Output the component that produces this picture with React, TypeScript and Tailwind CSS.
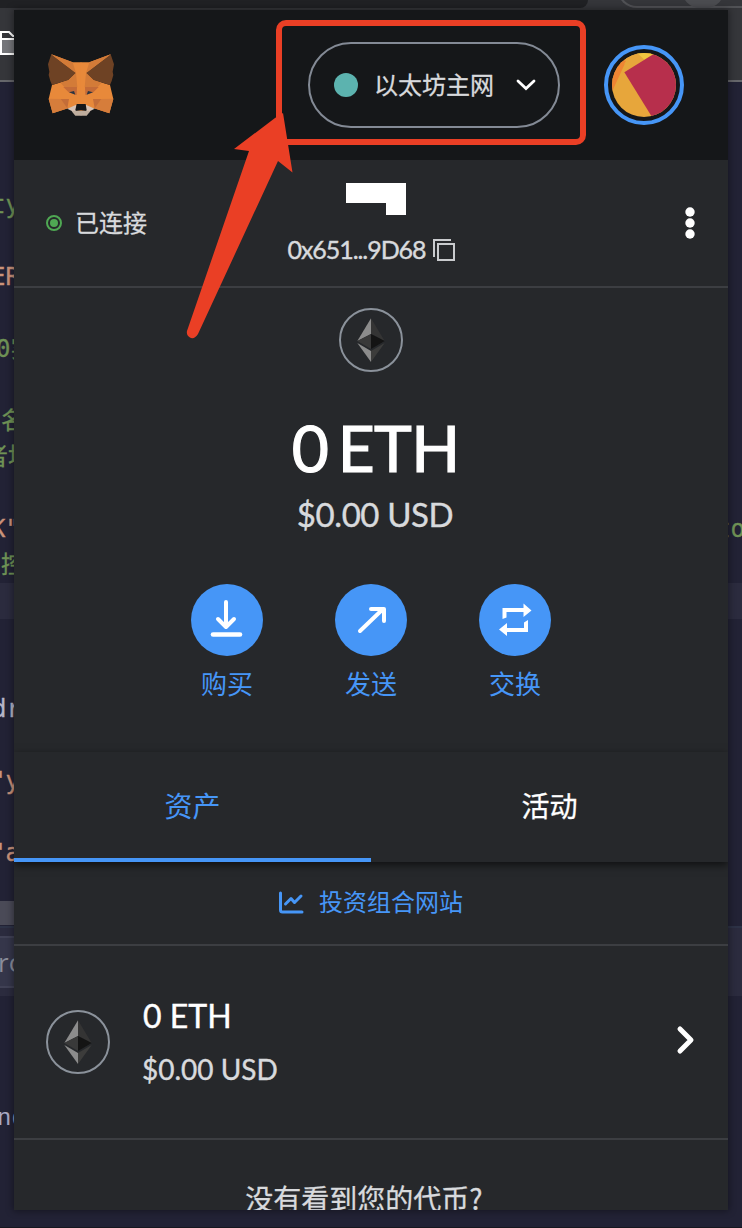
import React from "react";

const latin = "font-['Lato','Noto_Sans_CJK_SC',sans-serif]";
const cjk = "font-['Noto_Sans_CJK_SC',sans-serif]";

type CodeLine = { left?: string; color?: string; shift?: string; right?: string; active?: boolean };

const codeLines: CodeLine[] = [
  { left: "ty", color: "text-[#6f9255]", shift: "-ml-[9px]" },
  {},
  { left: "ER", color: "text-[#ca937a]", shift: "-ml-[9px]" },
  {},
  { left: "0实", color: "text-[#6f9255]", shift: "-ml-[4px]" },
  {},
  { left: "名", color: "text-[#6f9255]", shift: "ml-[1px]" },
  { left: "者地", color: "text-[#6f9255]", shift: "-ml-[16px]" },
  {},
  { left: 'K"', color: "text-[#ca937a]", shift: "-ml-[9px]", right: "to" },
  { left: "控", color: "text-[#6f9255]", shift: "ml-[1px]" },
  { active: true },
  {},
  {},
  { left: "dr", color: "text-[#b5b5c8]", shift: "-ml-[8px]" },
  {},
  { left: '"y', color: "text-[#ca937a]", shift: "-ml-[9px]" },
  {},
  { left: '"a', color: "text-[#ca937a]", shift: "-ml-[9px]" },
];

function Backdrop() {
  return (
    <div className="absolute inset-0 flex flex-col overflow-hidden bg-[#222235]">
      <div className="flex h-[10px] shrink-0 justify-between overflow-hidden bg-[#35363a]">
        <div className="h-2 w-[588px] rounded-br-[20px] bg-[#202124]" />
        <div className="-mt-[31px] flex h-[39px] w-[125px] justify-center rounded-bl-[20px] border-b-2 border-l-2 border-[#515256]">
          <div className="mt-[9px] ml-[44px] h-[30px] w-[42px] rounded-b-[18px] bg-[#4b4c50]" />
        </div>
      </div>
      <div className="h-[72px] shrink-0 border-b-2 border-[#66676b] bg-[#35363a]">
        <svg className="mt-[19px]" width="16" height="32" viewBox="0 0 16 32" fill="none">
          <path d="M1 10h14v15H1z" fill="#75767a" />
          <path d="M0 3h9l4 4h3M1 3v22h15M0 10h16" stroke="#fff" strokeWidth="2" />
        </svg>
      </div>
      <div className="h-[105px] shrink-0" />
      {codeLines.map((line, i) => (
        <div
          key={i}
          className={
            "flex h-9 shrink-0 items-center justify-between font-['DejaVu_Sans_Mono','Noto_Sans_CJK_SC',monospace] text-[24px] leading-9 [-webkit-text-stroke:0.3px_currentColor] " +
            (line.active ? "bg-[#2b2b3e]" : "")
          }
        >
          <div className="w-[14px] overflow-hidden whitespace-nowrap">
            <span className={`${line.color ?? ""} ${line.shift ?? ""} inline-block`}>{line.left}</span>
          </div>
          <div className="-mr-[3px] flex w-[24px] justify-end whitespace-nowrap text-[#6f9255]">{line.right}</div>
        </div>
      ))}
      <div className="h-[30px] shrink-0" />
      <div className="h-6 w-[14px] shrink-0 bg-[#4a4a57]" />
      <div className="mt-px h-[70px] shrink-0 border-t-2 border-[#2d3246] bg-[#2b2b3e] pt-2">
        <div className="flex h-[52px] w-5 items-center overflow-hidden border-y-2 border-[#404155] bg-[#35364a]">
          <span className="-ml-[2px] font-['Open_Sans',sans-serif] text-[26px] text-[#8a8c99]">ro</span>
        </div>
      </div>
      <div className="mt-[105px] h-9 shrink-0 font-['Liberation_Mono',monospace] text-[24px] leading-9 text-[#aaaac4]">
        <span className="-ml-[3px]">nd</span>
      </div>
      <div className="mt-auto h-px bg-[#17171f]" />
    </div>
  );
}

function Fox() {
  const half = (
    <>
      <path d="M153 163L217 187H243V333L203 325L157 340L145 297L155 255L205 240Z" fill="#e8893a" />
      <path d="M153 163L143 193L147 215L145 225L150 243L155 255L205 240L227 219Z" fill="#6e4224" />
      <path d="M153 163L217 187L227 219Z" fill="#d37b38" />
      <path d="M227 219L205 240L180 248L192 261L231 262Z" fill="#d37b38" />
      <path d="M189 261H230L229 285L205 277Z" fill="#c46b38" />
      <path d="M206 277L221 273L225 284Z" fill="#2b3542" />
      <path d="M145 296L181 297L203 325L157 340Z" fill="#d67d3b" />
      <path d="M181 297H206L201 325Z" fill="#c46d38" />
      <path d="M201 326L228 314L226 334H216Z" fill="#d7c3b6" />
      <path d="M218 332H243V347H225L214 334Z" fill="#bfae9e" />
    </>
  );
  return (
    <svg width="66" height="62" viewBox="143 162 198 186">
      {half}
      <g transform="translate(484 0) scale(-1 1)">{half}</g>
      <path d="M229 312H256L259 331H225Z" fill="#15181b" />
    </svg>
  );
}

function Avatar() {
  return (
    <div className="flex size-20 items-center justify-center rounded-full border-4 border-[#4696f7]">
      <svg className="size-16 rounded-full" viewBox="336 159 192 192">
        <rect x="336" y="159" width="192" height="192" fill="#e7a63b" />
        <path d="M336 159H390L378 184L336 275Z" fill="#ee8533" />
        <path d="M336 159H415L385 182L370 195L378 184Z" fill="#e7a63b" />
        <path d="M412 159H466L433 179Z" fill="#f1c63f" />
        <path d="M373 217L466 159H530V351H456Z" fill="#b72f4c" />
      </svg>
    </div>
  );
}

function EthToken() {
  return (
    <div className="flex size-16 shrink-0 items-center justify-center rounded-full border-2 border-[#8b929b]">
      <svg width="28" height="44" viewBox="560 474 84 132">
        <path d="M602 475L561 543L602 522Z" fill="#8c8c8c" />
        <path d="M602 475L643 543L602 522Z" fill="#343434" />
        <path d="M561 543L602 522V567Z" fill="#393939" />
        <path d="M643 543L602 522V567Z" fill="#141414" />
        <path d="M561 549L602 573V606Z" fill="#8c8c8c" />
        <path d="M643 549L602 573V606Z" fill="#3c3c3b" />
      </svg>
    </div>
  );
}

function Action({ label, children }: { label: string; children: React.ReactNode }) {
  return (
    <div className="flex w-[72px] flex-col items-center">
      <div className="flex size-[72px] items-center justify-center rounded-full bg-[#4696f7]">
        <svg width="40" height="40" viewBox="0 0 40 40" fill="none" stroke="#fff" strokeLinecap="round" strokeLinejoin="round">
          {children}
        </svg>
      </div>
      <span className="mt-[9px] text-[26px] leading-9 text-[#4696f7]">{label}</span>
    </div>
  );
}

function Callout() {
  return (
    <>
      <div className="absolute top-5 left-[276px] h-[125px] w-[310px] rounded-[10px] border-[6px] border-[#ea3f25]" />
      <svg className="absolute top-[110px] left-[180px]" width="120" height="234" viewBox="180 110 120 234">
        <path
          d="M283 113L292.5 172.5L278 161L198 334Q195 339 191 338Q186 336 187 331L249 151L234 149L275 118Z"
          fill="#ea3f25"
        />
      </svg>
    </>
  );
}

export default function App() {
  return (
    <div className={`relative h-[1228px] w-[742px] overflow-hidden pt-[10px] pl-[14px] ${cjk}`}>
      <Backdrop />
      <main className="relative flex h-[1200px] w-[714px] flex-col overflow-hidden bg-[#26282b] text-[#d8dadd] shadow-[0_0_7px_1px_rgba(0,0,0,0.4)]">
        <header className="flex h-[150px] shrink-0 items-center bg-[#151719] pl-[34px]">
          <Fox />
          <div className="ml-[194px] flex h-[86px] w-[252px] items-center rounded-full border-2 border-[#838a95] pl-6">
            <span className="size-6 rounded-full bg-[#5cb3af]" />
            <span className="mr-px ml-4 pb-[3px] text-[24px] leading-9 [-webkit-text-stroke:0.3px_currentColor]">以太坊主网</span>
            <svg className="ml-[21px]" width="20" height="12" viewBox="0 0 20 12" fill="none">
              <path d="M2 2L10 9.5L18 2" stroke="#fff" strokeWidth="2.8" strokeLinecap="round" />
            </svg>
          </div>
          <div className="ml-11">
            <Avatar />
          </div>
        </header>

        <div className="grid h-[128px] shrink-0 grid-cols-3 items-center border-b-2 border-[#3c3e42]">
          <div className="flex items-center pl-8">
            <span className="flex size-4 items-center justify-center rounded-full border-2 border-[#4fa853]">
              <span className="size-2 rounded-full bg-[#4fa853]" />
            </span>
            <span className="ml-[13px] pb-[3px] text-[24px] leading-9 [-webkit-text-stroke:0.3px_currentColor]">已连接</span>
          </div>
          <div className="flex flex-col items-center pt-[3px]">
            <div className="ml-[10px] flex w-[60px] flex-col items-end">
              <div className="h-5 w-[60px] bg-white" />
              <div className="h-3 w-5 bg-white" />
            </div>
            <div className="mt-4 flex items-center">
              <span className={`${latin} ml-px text-[25px] leading-9 tracking-[-1.05px] [-webkit-text-stroke:0.4px_currentColor]`}>0x651...9D68</span>
              <svg className="mt-[3px] ml-[6px]" width="24" height="24" viewBox="0 0 24 24" fill="none" stroke="#c9cbce" strokeWidth="2">
                <path d="M2 19V2H19M6 6H22V22H6Z" />
              </svg>
            </div>
          </div>
          <div className="flex justify-end pr-[33px]">
            <svg width="10" height="32" viewBox="0 0 10 32" fill="#fff">
              <circle cx="5" cy="5" r="4.7" />
              <circle cx="5" cy="16" r="4.7" />
              <circle cx="5" cy="27" r="4.7" />
            </svg>
          </div>
        </div>

        <section className="flex h-[464px] shrink-0 flex-col items-center pt-5">
          <EthToken />
          <div className={`${latin} mt-[37px] pl-[9px] text-[64px] leading-[78px] font-normal tracking-[-0.7px] whitespace-nowrap text-white [word-spacing:-6px] [-webkit-text-stroke:1.2px_white]`}>
            0 ETH
          </div>
          <div className={`${latin} mt-[4px] pl-2 text-[33px] leading-[46px] tracking-[-0.4px] whitespace-nowrap [-webkit-text-stroke:0.4px_currentColor]`}>$0.00 USD</div>
          <div className="mt-[47px] flex gap-[72px]">
            <Action label="购买">
              <path d="M19 2V26M11 19L19 27L27 19" strokeWidth="4" />
              <path d="M6 34.500H33" strokeWidth="4.600" />
            </Action>
            <Action label="发送">
              <path d="M9 31L32 9M20 9H33V21" strokeWidth="4" />
            </Action>
            <Action label="交换">
              <g stroke="none" fill="#fff">
                <path d="M7.500 19V8H28.500V3.500L36.500 10.500L28.500 17V12H11.500V17.500Z" />
                <path d="M33 20V32H12V36L4 29.500L12 23V28H29V22.500Z" />
              </g>
            </Action>
          </div>
        </section>

        <nav className="relative z-10 flex h-[110px] shrink-0 bg-[#26282b] text-[28px] shadow-[0_3px_8px_rgba(0,0,0,0.6)]">
          <div className="flex flex-1 items-center justify-center border-b-4 border-[#4696f7] text-[#4696f7]">资产</div>
          <div className="flex flex-1 items-center justify-center pb-1 text-white [-webkit-text-stroke:0.3px_currentColor]">活动</div>
        </nav>

        <div className="flex h-[84px] shrink-0 items-center justify-center border-b-2 border-[#3c3e42] pb-1 text-[24px] text-[#4696f7]">
          <svg className="mt-px" width="26" height="24" viewBox="0 0 26 24" fill="none" stroke="#4696f7" strokeWidth="3" strokeLinecap="round" strokeLinejoin="round">
            <path d="M1.500 3V20Q1.500 22 3.500 22H23M6.500 14L12 8.500L15.500 12.500L22 6" />
          </svg>
          <span className="ml-[14px]">投资组合网站</span>
        </div>

        <div className="flex h-[194px] shrink-0 items-center border-b-2 border-[#3c3e42] pr-8 pl-8">
          <EthToken />
          <div className={`${latin} ml-8 flex flex-1 flex-col gap-[9px] pt-px [-webkit-text-stroke:0.4px_currentColor]`}>
            <span className="pl-px text-[32px] leading-[44px] text-white">0 ETH</span>
            <span className="text-[28px] leading-[44px]">$0.00 USD</span>
          </div>
          <svg className="-mt-1" width="20" height="32" viewBox="0 0 20 32" fill="none">
            <path d="M4 5L15 16L4 27" stroke="#fff" strokeWidth="5" strokeLinecap="round" strokeLinejoin="round" />
          </svg>
        </div>

        <div className="pt-[37px] pr-[14px] text-center text-[28px] leading-[42px] whitespace-nowrap [-webkit-text-stroke:0.3px_currentColor]">没有看到您的代币?</div>
      </main>
      <Callout />
    </div>
  );
}
